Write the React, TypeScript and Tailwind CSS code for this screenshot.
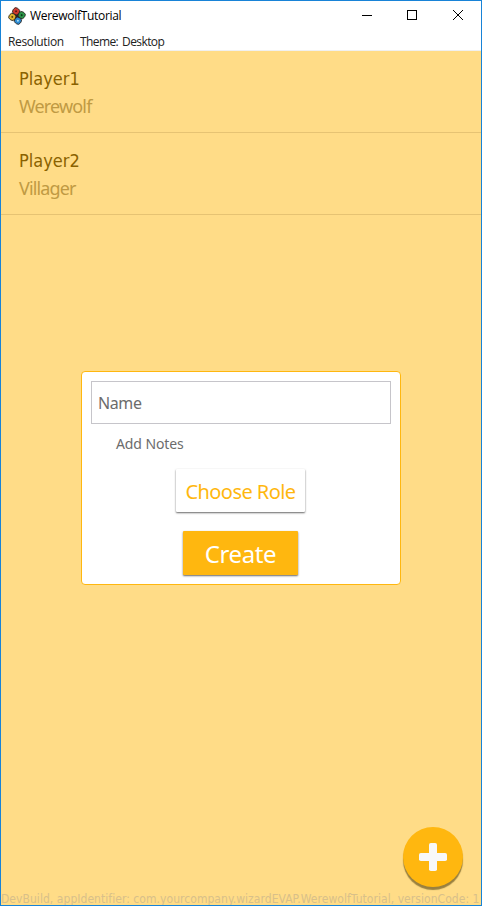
const players = [
  { name: 'Player1', role: 'Werewolf' },
  { name: 'Player2', role: 'Villager' },
];

function AppLogo() {
  return (
    <svg className="h-[18px] w-[18px]" viewBox="0 0 18 18">
      <g transform="rotate(34 9 9)" stroke="#2b2724" strokeWidth="0.8">
        <rect x="4" y="4" width="10" height="10" fill="#262422" stroke="none" />
        <rect x="2.3" y="2.3" width="6.6" height="6.6" rx="2.7" fill="#d03a2e" />
        <rect x="9.1" y="2.3" width="6.6" height="6.6" rx="2.7" fill="#2c9448" />
        <rect x="9.1" y="9.1" width="6.6" height="6.6" rx="2.7" fill="#2b8ad2" />
        <rect x="2.3" y="9.1" width="6.6" height="6.6" rx="2.7" fill="#e0b42e" />
        <circle cx="5.6" cy="5.6" r="1" fill="#551511" stroke="none" />
        <circle cx="12.4" cy="5.6" r="1" fill="#0c3d1c" stroke="none" />
        <circle cx="12.4" cy="12.4" r="1" fill="#b5e2f5" stroke="none" />
        <circle cx="5.6" cy="12.4" r="1" fill="#5c460c" stroke="none" />
      </g>
    </svg>
  );
}

function TitleBar() {
  return (
    <header className="flex h-[30px] items-center bg-white pl-[7px] font-['Open_Sans',sans-serif] text-[12px] text-black">
      <AppLogo />
      <h1 className="ml-[4px] flex-1 whitespace-nowrap tracking-[-0.3px]">WerewolfTutorial</h1>
      <svg className="h-[30px] w-[138px]" viewBox="0 0 138 30" fill="none" stroke="#000" shapeRendering="crispEdges">
        <path d="M19 14.5h10" />
        <rect x="64.5" y="9.5" width="9" height="9" />
        <path d="M110 9l10 10M120 9l-10 10" shapeRendering="auto" />
      </svg>
    </header>
  );
}

export default function App() {
  return (
    <div className="relative flex h-[906px] w-[482px] flex-col overflow-hidden border border-[#1883d7] bg-[#ffdc87] font-['Noto_Sans',sans-serif]">
      <TitleBar />
      <nav className="flex h-[20px] items-center gap-[16px] border-b border-[#f0f0f0] bg-white pt-[2px] pl-[7px] font-['Open_Sans',sans-serif] text-[12px] whitespace-nowrap text-[#222]">
        <span className="w-[56px] tracking-[-0.36px]">Resolution</span>
        <span className="tracking-[-0.6px] [word-spacing:1.5px]">Theme: Desktop</span>
      </nav>

      <main className="relative flex-1">
        <ul>
          {players.map((p) => (
            <li key={p.name} className="flex h-[82px] flex-col gap-[3px] border-b border-[#e6c373] pt-[15px] pl-[18px]">
              <span className="font-['DejaVu_Sans_Condensed','DejaVu_Sans',sans-serif] text-[18px] leading-[25px] text-[#8a6200]">
                {p.name}
              </span>
              <span className="text-[18px] leading-[24px] tracking-[-0.85px] text-[#c09a43]">{p.role}</span>
            </li>
          ))}
        </ul>

        <div className="absolute inset-0 flex items-center justify-center">
          <section className="flex h-[214px] w-[320px] flex-col items-center rounded-[4px] border border-[#ffb70f] bg-white pt-[9px]">
            <div className="flex h-[43px] w-[300px] items-center border border-[#c6c5ca] pl-[6px] text-[16px] tracking-[-0.4px] text-[#6c6c6c]">
              Name
            </div>
            <div className="mt-[10px] h-[20px] w-[250px] text-[14px] leading-[20px] tracking-[-0.1px] text-[#6c6c6c]">Add Notes</div>
            <button className="mt-[15px] mr-[1px] h-[43px] w-[129px] rounded-[1px] bg-white pt-[2px] text-[20px] tracking-[-0.55px] whitespace-nowrap text-[#ffb70f] shadow-[0_1px_2px_rgba(0,0,0,0.6)]">
              Choose Role
            </button>
            <button className="mt-[19px] mr-[1px] h-[44px] w-[115px] rounded-[1px] bg-[#ffb70f] pt-px text-[24px] tracking-[-0.4px] text-white shadow-[0_1px_2px_rgba(0,0,0,0.6)]">
              Create
            </button>
          </section>
        </div>

        <button className="absolute right-[18px] bottom-[18px] flex h-[60px] w-[60px] items-center justify-center rounded-full bg-[#ffb70f] shadow-[0_3px_1px_#99803f]">
          <svg className="h-[28px] w-[28px]" viewBox="0 0 28 28" fill="#f8f8f8">
            <rect x="10" y="0" width="8" height="28" rx="1.8" />
            <rect x="0" y="10" width="28" height="8" rx="1.8" />
          </svg>
        </button>

        <p className="absolute bottom-[-2px] left-0 font-['DejaVu_Sans_Condensed','DejaVu_Sans',sans-serif] text-[12px] leading-[16px] tracking-[0.05px] whitespace-nowrap text-[#d8c08a]">
          DevBuild, appIdentifier: com.yourcompany.wizardEVAP.WerewolfTutorial, versionCode: 1
        </p>
      </main>
    </div>
  );
}
